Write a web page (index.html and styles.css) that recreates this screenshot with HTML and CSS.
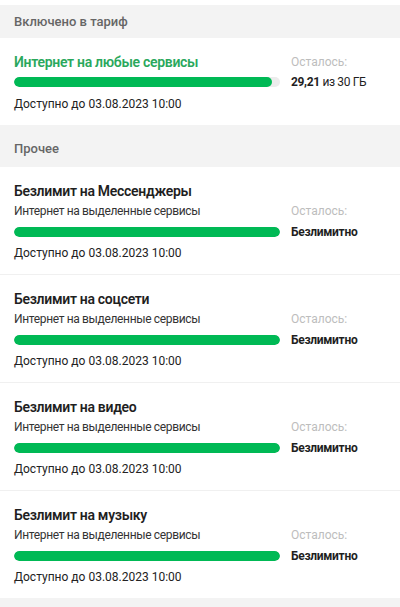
FILE: index.html
```html
<!DOCTYPE html>
<html lang="ru">
<head>
<meta charset="utf-8">
<link rel="stylesheet" href="styles.css">
</head>
<body>
<div class="page">
  <div class="section-head first">Включено в тариф</div>
  <div class="card main">
    <div class="title green">Интернет на любые сервисы</div>
    <div class="label">Осталось:</div>
    <div class="track"><div class="fill" style="width:97%"></div></div>
    <div class="value"><b>29,21</b> из 30 ГБ</div>
    <div class="date">Доступно до 03.08.2023 10:00</div>
  </div>
  <div class="section-head second">Прочее</div>
  <div class="card">
    <div class="title wide">Безлимит на Мессенджеры</div>
    <div class="sub">Интернет на выделенные сервисы</div>
    <div class="label">Осталось:</div>
    <div class="track"><div class="fill" style="width:100%"></div></div>
    <div class="value bold">Безлимитно</div>
    <div class="date">Доступно до 03.08.2023 10:00</div>
  </div>
  <div class="card">
    <div class="title wide">Безлимит на соцсети</div>
    <div class="sub">Интернет на выделенные сервисы</div>
    <div class="label">Осталось:</div>
    <div class="track"><div class="fill" style="width:100%"></div></div>
    <div class="value bold">Безлимитно</div>
    <div class="date">Доступно до 03.08.2023 10:00</div>
  </div>
  <div class="card">
    <div class="title wide">Безлимит на видео</div>
    <div class="sub">Интернет на выделенные сервисы</div>
    <div class="label">Осталось:</div>
    <div class="track"><div class="fill" style="width:100%"></div></div>
    <div class="value bold">Безлимитно</div>
    <div class="date">Доступно до 03.08.2023 10:00</div>
  </div>
  <div class="card last">
    <div class="title wide">Безлимит на музыку</div>
    <div class="sub">Интернет на выделенные сервисы</div>
    <div class="label">Осталось:</div>
    <div class="track"><div class="fill" style="width:100%"></div></div>
    <div class="value bold">Безлимитно</div>
    <div class="date">Доступно до 03.08.2023 10:00</div>
  </div>
  <div class="footer"></div>
</div>
</body>
</html>
```
FILE: styles.css
```css
* { box-sizing: border-box; margin: 0; padding: 0; }
html, body { background: #fff; }
body {
  font-family: Roboto, "Noto Sans", "Liberation Sans", sans-serif;
  color: #1f1f1f;
  width: 400px;
  height: 607px;
  overflow: hidden;
}
.page { padding-top: 5px; }
.section-head {
  background: #f3f3f3;
  color: #666;
  font-size: 13px;
  font-weight: 500;
  line-height: 17px;
  padding-left: 14px;
}
.section-head.first { height: 33px; padding-top: 8px; }
.section-head.second { height: 42px; padding-top: 15px; }
.card {
  display: grid;
  grid-template-columns: 266px auto;
  column-gap: 11px;
  padding: 15px 0 14px 14px;
  border-bottom: 1px solid #f0f0f0;
  grid-template-rows: 18px 16px 20px 15px;
  row-gap: 3px;
  align-items: center;
}
.card.main {
  grid-template-rows: 18px 18px 19px;
  padding: 15px 0 13px 14px;
  border-bottom: none;
  row-gap: 2px;
}
.card.main .date { align-self: end; }
.card.last { border-bottom: none; }
.title {
  font-size: 14px;
  font-weight: 600;
  line-height: 18px;
  letter-spacing: -0.3px;
  color: #1f1f1f;
  white-space: nowrap;
}
.title.wide { grid-column: 1 / 3; }
.title.green { color: #2aa85c; }
.sub {
  font-size: 12px;
  line-height: 16px;
  letter-spacing: -0.35px;
  color: #333;
  white-space: nowrap;
}
.label {
  font-size: 12px;
  line-height: 16px;
  color: #bdbdbd;
  white-space: nowrap;
}
.track {
  height: 10px;
  border-radius: 5px;
  background: #ececec;
  overflow: hidden;
}
.fill {
  height: 100%;
  border-radius: 5px;
  background: #00b955;
}
.value {
  font-size: 12px;
  line-height: 16px;
  letter-spacing: -0.35px;
  color: #1f1f1f;
  white-space: nowrap;
}
.value b { font-weight: 700; }
.value.bold { font-weight: 700; letter-spacing: -0.3px; }
.date {
  grid-column: 1 / 2;
  font-size: 12px;
  line-height: 16px;
  color: #222;
  white-space: nowrap;
}
.footer { background: #f3f3f3; height: 12px; }
```
